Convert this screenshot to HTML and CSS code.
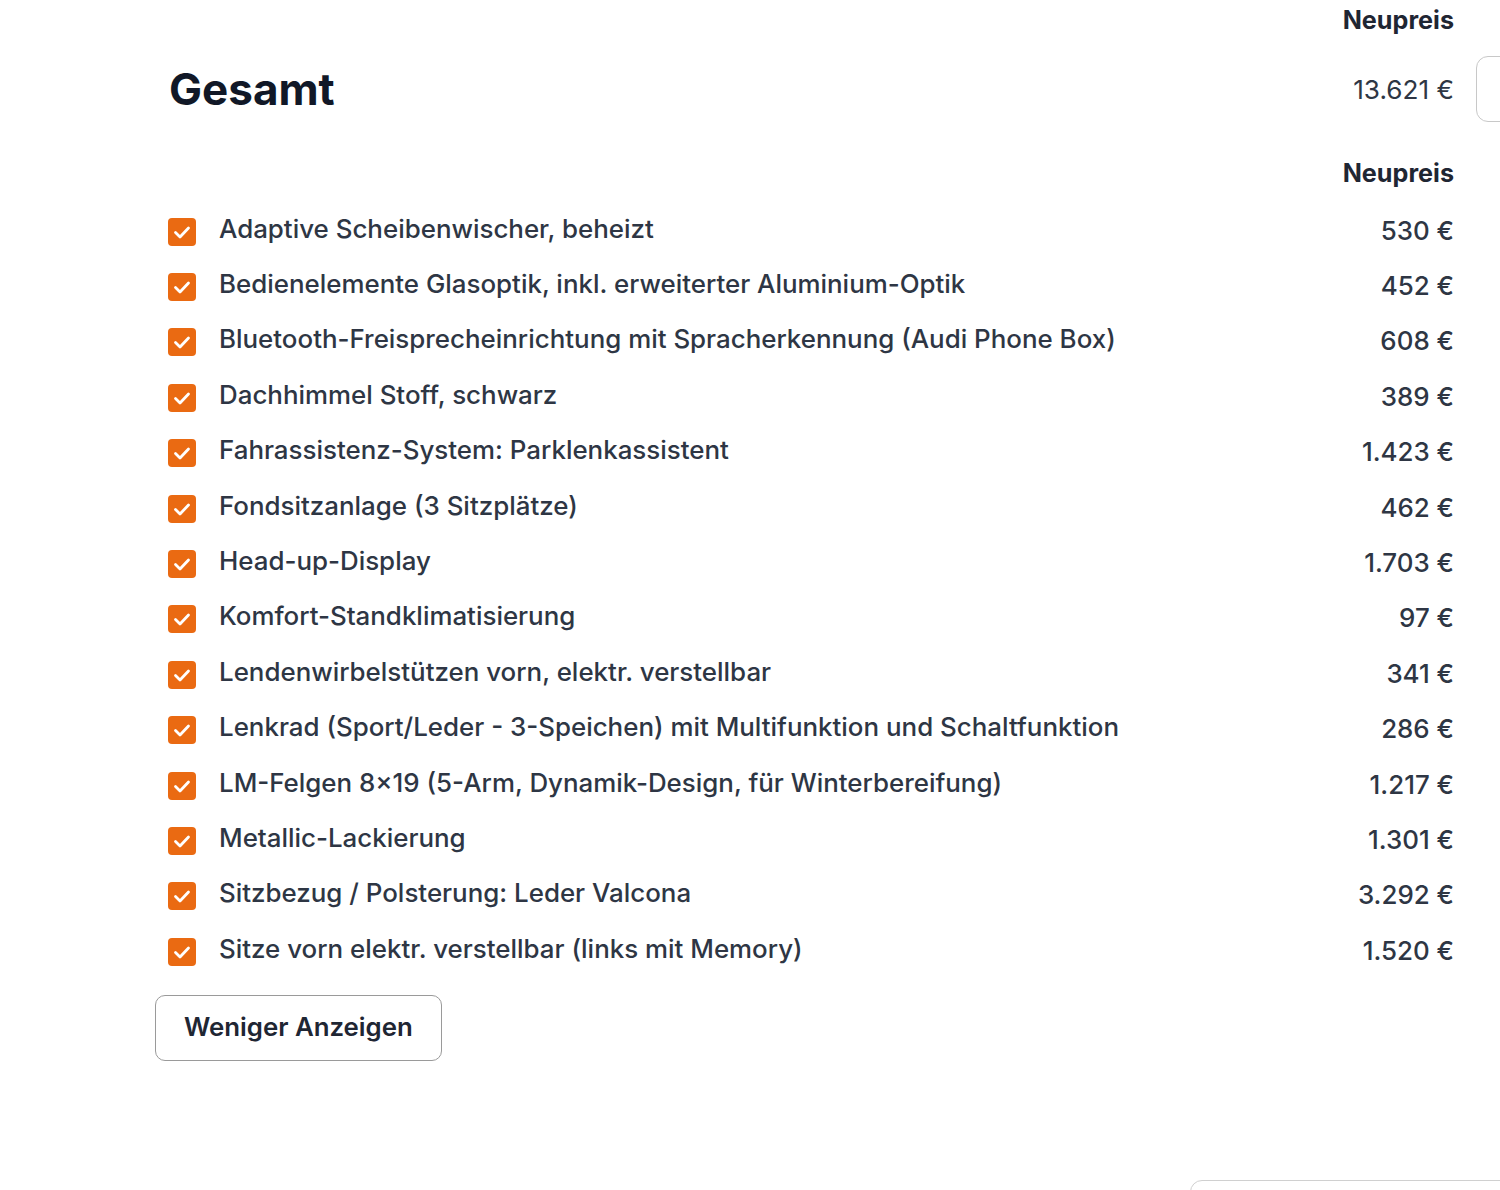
FILE: index.html
```html
<!DOCTYPE html>
<html lang="de">
<head>
<meta charset="utf-8">
<title>Gesamt</title>
<link rel="stylesheet" href="styles.css">
</head>
<body>
<div class="page">
  <main class="main">
    <div class="col-head">Neupreis</div>
    <div class="total-row">
      <h1 class="total-title">Gesamt</h1>
      <div class="total-price">13.621 €</div>
      <div class="side-box"></div>
    </div>
    <div class="col-head col-head-list">Neupreis</div>
    <ul class="list">
      <li class="item"><span class="check"><svg viewBox="0 0 28 28"><path d="M7.5 14.5l4.5 4.5 8.5-9"/></svg></span><span class="label">Adaptive Scheibenwischer, beheizt</span><span class="price">530 €</span></li>
      <li class="item"><span class="check"><svg viewBox="0 0 28 28"><path d="M7.5 14.5l4.5 4.5 8.5-9"/></svg></span><span class="label">Bedienelemente Glasoptik, inkl. erweiterter Aluminium-Optik</span><span class="price">452 €</span></li>
      <li class="item"><span class="check"><svg viewBox="0 0 28 28"><path d="M7.5 14.5l4.5 4.5 8.5-9"/></svg></span><span class="label">Bluetooth-Freisprecheinrichtung mit Spracherkennung (Audi Phone Box)</span><span class="price">608 €</span></li>
      <li class="item"><span class="check"><svg viewBox="0 0 28 28"><path d="M7.5 14.5l4.5 4.5 8.5-9"/></svg></span><span class="label">Dachhimmel Stoff, schwarz</span><span class="price">389 €</span></li>
      <li class="item"><span class="check"><svg viewBox="0 0 28 28"><path d="M7.5 14.5l4.5 4.5 8.5-9"/></svg></span><span class="label">Fahrassistenz-System: Parklenkassistent</span><span class="price">1.423 €</span></li>
      <li class="item"><span class="check"><svg viewBox="0 0 28 28"><path d="M7.5 14.5l4.5 4.5 8.5-9"/></svg></span><span class="label">Fondsitzanlage (3 Sitzplätze)</span><span class="price">462 €</span></li>
      <li class="item"><span class="check"><svg viewBox="0 0 28 28"><path d="M7.5 14.5l4.5 4.5 8.5-9"/></svg></span><span class="label">Head-up-Display</span><span class="price">1.703 €</span></li>
      <li class="item"><span class="check"><svg viewBox="0 0 28 28"><path d="M7.5 14.5l4.5 4.5 8.5-9"/></svg></span><span class="label">Komfort-Standklimatisierung</span><span class="price">97 €</span></li>
      <li class="item"><span class="check"><svg viewBox="0 0 28 28"><path d="M7.5 14.5l4.5 4.5 8.5-9"/></svg></span><span class="label">Lendenwirbelstützen vorn, elektr. verstellbar</span><span class="price">341 €</span></li>
      <li class="item"><span class="check"><svg viewBox="0 0 28 28"><path d="M7.5 14.5l4.5 4.5 8.5-9"/></svg></span><span class="label">Lenkrad (Sport/Leder - 3-Speichen) mit Multifunktion und Schaltfunktion</span><span class="price">286 €</span></li>
      <li class="item"><span class="check"><svg viewBox="0 0 28 28"><path d="M7.5 14.5l4.5 4.5 8.5-9"/></svg></span><span class="label">LM-Felgen 8×19 (5-Arm, Dynamik-Design, für Winterbereifung)</span><span class="price">1.217 €</span></li>
      <li class="item"><span class="check"><svg viewBox="0 0 28 28"><path d="M7.5 14.5l4.5 4.5 8.5-9"/></svg></span><span class="label">Metallic-Lackierung</span><span class="price">1.301 €</span></li>
      <li class="item"><span class="check"><svg viewBox="0 0 28 28"><path d="M7.5 14.5l4.5 4.5 8.5-9"/></svg></span><span class="label">Sitzbezug / Polsterung: Leder Valcona</span><span class="price">3.292 €</span></li>
      <li class="item"><span class="check"><svg viewBox="0 0 28 28"><path d="M7.5 14.5l4.5 4.5 8.5-9"/></svg></span><span class="label">Sitze vorn elektr. verstellbar (links mit Memory)</span><span class="price">1.520 €</span></li>
    </ul>
    <button class="btn" type="button">Weniger Anzeigen</button>
    <div class="bottom-row">
      <div class="bottom-box"></div>
    </div>
  </main>
</div>
</body>
</html>
```

FILE: styles.css
```css
* { box-sizing: border-box; }
html, body { margin: 0; padding: 0; background: #ffffff; }
body {
  font-family: Inter, "Noto Sans", "Liberation Sans", sans-serif;
  color: #2e3644;
  overflow: hidden;
}
.page {
  width: 1500px;
  height: 1190px;
  overflow: hidden;
}
.main {
  margin-left: 155px;
  width: 1299px;
  display: flex;
  flex-direction: column;
}
.col-head {
  align-self: flex-end;
  font-size: 25.2px;
  font-weight: 700;
  line-height: 32px;
  color: #1f2633;
  margin-top: 4px;
}
.total-row {
  display: flex;
  align-items: center;
  margin-top: 20px;
  height: 66px;
}
.total-title {
  margin: 0 0 0 14px;
  font-size: 44px;
  font-weight: 700;
  color: #111827;
  flex: 1;
}
.total-price {
  font-size: 26.2px;
  color: #2e3644;
}
.side-box {
  flex-shrink: 0;
  width: 220px;
  height: 66px;
  margin-left: 22px;
  margin-right: -242px;
  border: 1.5px solid #c8c8c8;
  border-radius: 12px;
}
.col-head-list {
  margin-top: 35px;
}
.list {
  list-style: none;
  margin: 14px 0 0 0;
  padding: 0;
}
.item {
  display: flex;
  align-items: center;
  height: 55.4px;
}
.check {
  width: 28px;
  height: 28px;
  margin-left: 13px;
  margin-top: 2px;
  border-radius: 4px;
  background: #ea6a12;
  flex-shrink: 0;
  display: flex;
}
.check svg {
  width: 28px;
  height: 28px;
  fill: none;
  stroke: #ffffff;
  stroke-width: 2.8;
  stroke-linecap: round;
  stroke-linejoin: round;
}
.label {
  flex: 1;
  margin-left: 23px;
  font-size: 25.9px;
  font-weight: 500;
  line-height: 32px;
  color: #2e3644;
  margin-top: -4px;
}
.price {
  font-size: 25.9px;
  font-weight: 500;
  line-height: 32px;
  color: #2e3644;
}
.btn {
  align-self: flex-start;
  margin-top: 17px;
  height: 66px;
  padding: 0 28px 4px 28px;
  background: #ffffff;
  border: 1.5px solid #9a9a9a;
  border-radius: 10px;
  font-family: Inter, "Noto Sans", "Liberation Sans", sans-serif;
  font-size: 25.8px;
  font-weight: 600;
  color: #1f2633;
}
.bottom-row {
  display: flex;
  justify-content: flex-end;
  margin-top: 119px;
}
.bottom-box {
  width: 400px;
  height: 80px;
  margin-left: 1035px;
  margin-right: -136px;
  flex-shrink: 0;
  border: 1.5px solid #d0d0d0;
  border-radius: 12px;
}
```
